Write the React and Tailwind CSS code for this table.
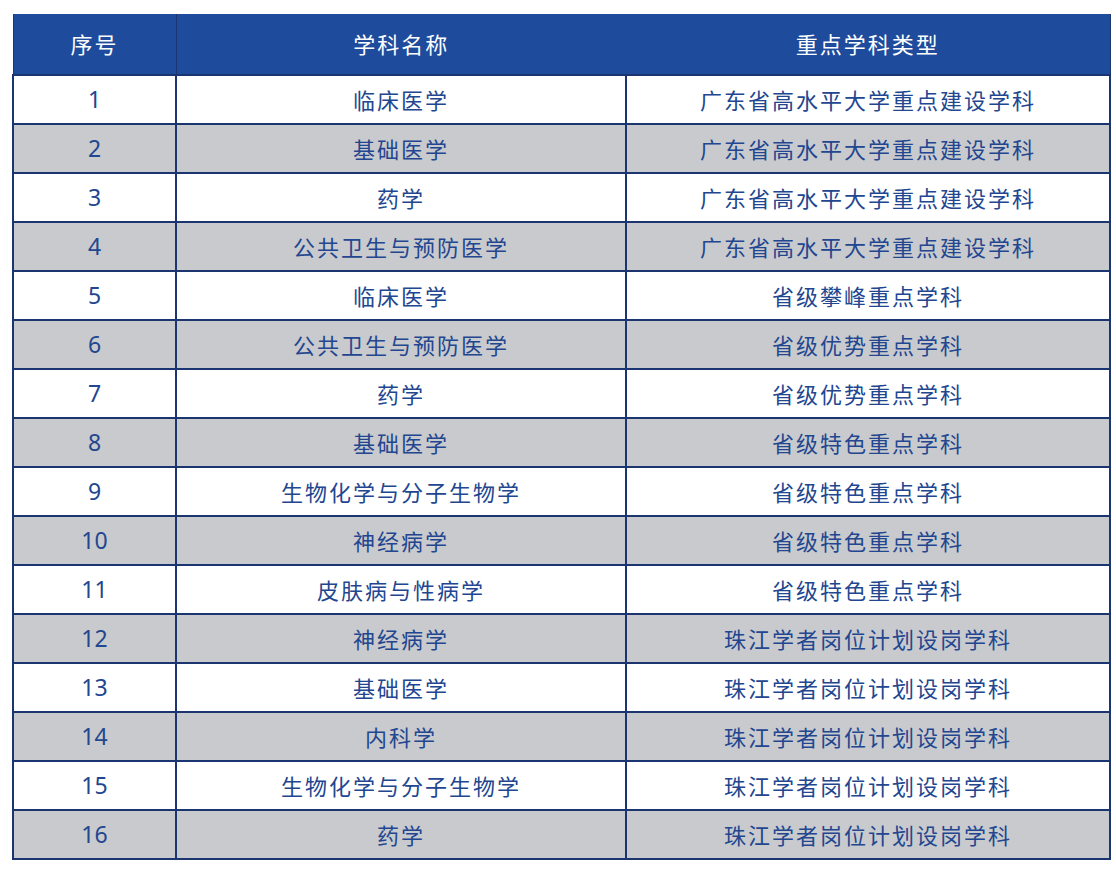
const rows = [
  ['1', '临床医学', '广东省高水平大学重点建设学科'],
  ['2', '基础医学', '广东省高水平大学重点建设学科'],
  ['3', '药学', '广东省高水平大学重点建设学科'],
  ['4', '公共卫生与预防医学', '广东省高水平大学重点建设学科'],
  ['5', '临床医学', '省级攀峰重点学科'],
  ['6', '公共卫生与预防医学', '省级优势重点学科'],
  ['7', '药学', '省级优势重点学科'],
  ['8', '基础医学', '省级特色重点学科'],
  ['9', '生物化学与分子生物学', '省级特色重点学科'],
  ['10', '神经病学', '省级特色重点学科'],
  ['11', '皮肤病与性病学', '省级特色重点学科'],
  ['12', '神经病学', '珠江学者岗位计划设岗学科'],
  ['13', '基础医学', '珠江学者岗位计划设岗学科'],
  ['14', '内科学', '珠江学者岗位计划设岗学科'],
  ['15', '生物化学与分子生物学', '珠江学者岗位计划设岗学科'],
  ['16', '药学', '珠江学者岗位计划设岗学科'],
]

export default function App() {
  return (
    <div
      className="w-[1116px] h-[872px] bg-white pl-[12px] pt-[14px]"
      style={{ fontFamily: '"Noto Sans", "Noto Sans CJK SC", sans-serif' }}
    >
      <table className="w-[1097px] border-collapse table-fixed text-[22px] text-[#22468f]">
        <colgroup>
          <col className="w-[163px]" />
          <col className="w-[450px]" />
          <col className="w-[484px]" />
        </colgroup>
        <thead>
          <tr className="h-[61px] bg-[#1e4b9c] text-white">
            <th className="font-normal tracking-[2px] border-x border-[#1a3570]">序号</th>
            <th className="font-normal tracking-[2px]">学科名称</th>
            <th className="font-normal tracking-[2px] border-r border-[#1a3570]">重点学科类型</th>
          </tr>
        </thead>
        <tbody>
          {rows.map((r, i) => (
            <tr key={r[0]} className={`h-[49px] ${i % 2 === 0 ? 'bg-white' : 'bg-[#c9cacd]'}`}>
              <td className="text-center border-2 border-[#1a3570] text-[23px] leading-none">{r[0]}</td>
              <td className="text-center border-2 border-[#1a3570] tracking-[2px] leading-none">{r[1]}</td>
              <td className="text-center border-2 border-[#1a3570] tracking-[2px] leading-none">{r[2]}</td>
            </tr>
          ))}
        </tbody>
      </table>
    </div>
  )
}
